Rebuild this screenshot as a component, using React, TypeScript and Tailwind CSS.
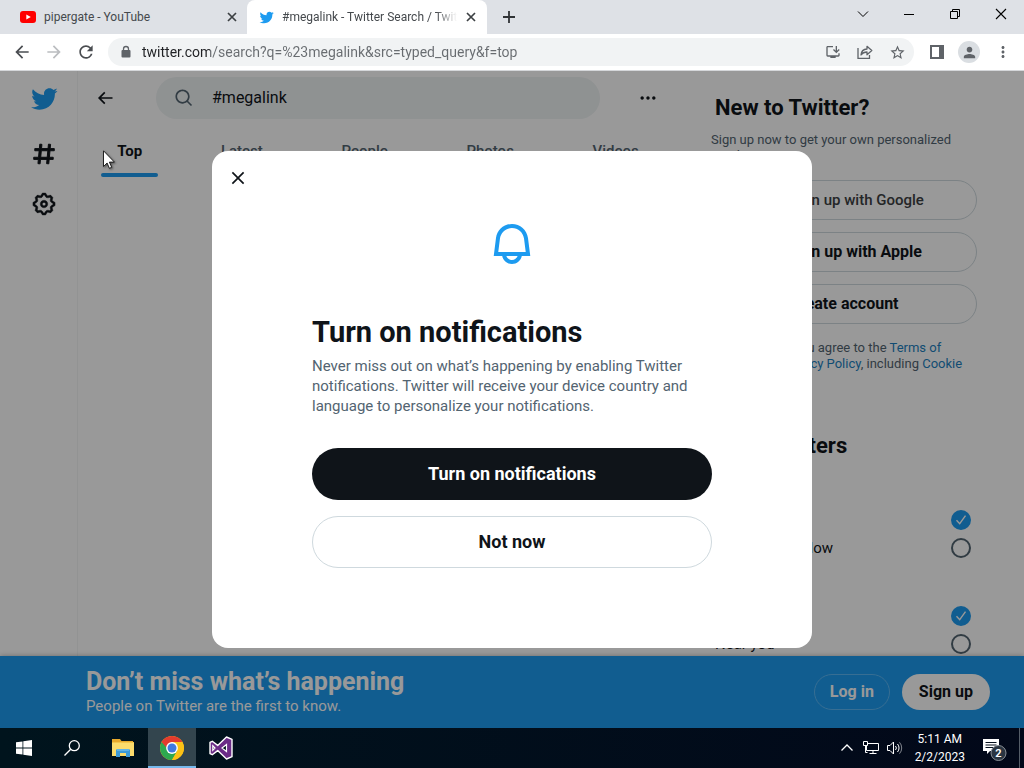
import type { ReactNode } from "react";
import {
  MdArrowBack,
  MdArrowForward,
  MdMoreVert,
  MdOutlineInstallDesktop,
  MdPerson,
  MdRefresh,
  MdStarBorder,
} from "react-icons/md";
import { FcGoogle } from "react-icons/fc";
import { FaApple } from "react-icons/fa";

const PATHS = {
  bird: "M23.643 4.937c-.835.37-1.732.62-2.675.733.962-.576 1.7-1.49 2.048-2.578-.9.534-1.897.922-2.958 1.13-.85-.904-2.06-1.47-3.4-1.47-2.572 0-4.658 2.086-4.658 4.66 0 .364.042.718.12 1.06-3.873-.195-7.304-2.05-9.602-4.868-.4.69-.63 1.49-.63 2.342 0 1.616.823 3.043 2.072 3.878-.764-.025-1.482-.234-2.11-.583v.06c0 2.257 1.605 4.14 3.737 4.568-.392.106-.803.162-1.227.162-.3 0-.593-.028-.877-.082.593 1.85 2.313 3.198 4.352 3.234-1.595 1.25-3.604 1.995-5.786 1.995-.376 0-.747-.022-1.112-.065 2.062 1.323 4.51 2.093 7.14 2.093 8.57 0 13.255-7.098 13.255-13.254 0-.2-.005-.402-.014-.602.91-.658 1.7-1.477 2.323-2.41z",
  search:
    "M10.25 3.75c-3.59 0-6.5 2.91-6.5 6.5s2.91 6.5 6.5 6.5c1.795 0 3.419-.726 4.596-1.904 1.178-1.177 1.904-2.801 1.904-4.596 0-3.59-2.91-6.5-6.5-6.5zm-8.5 6.5c0-4.694 3.806-8.5 8.5-8.5s8.5 3.806 8.5 8.5c0 1.986-.682 3.815-1.824 5.262l4.781 4.781-1.414 1.414-4.781-4.781c-1.447 1.142-3.276 1.824-5.262 1.824-4.694 0-8.5-3.806-8.5-8.5z",
  back: "M7.414 13l5.043 5.04-1.414 1.42L3.586 12l7.457-7.46 1.414 1.42L7.414 11H21v2H7.414z",
  close:
    "M10.59 12L4.54 5.96l1.42-1.42L12 10.59l6.04-6.05 1.42 1.42L13.41 12l6.05 6.04-1.42 1.42L12 13.41l-6.04 6.05-1.42-1.42L10.59 12z",
  dots: "M3 12c0-1.1.9-2 2-2s2 .9 2 2-.9 2-2 2-2-.9-2-2zm9 2c1.1 0 2-.9 2-2s-.9-2-2-2-2 .9-2 2 .9 2 2 2zm7 0c1.1 0 2-.9 2-2s-.9-2-2-2-2 .9-2 2 .9 2 2 2z",
  hash: "M10.09 3.098L9.72 7h5.99l.39-4.089 1.99.187L17.72 7h3.78v2h-3.97l-.56 6h3.53v2h-3.72l-.38 4.089-1.99-.187.36-3.902H8.78l-.38 4.089-1.99-.187L6.77 17H2.5v-2h4.46l.56-6H3.5V7h4.21l.39-4.089 1.99.187zM14.96 15l.56-6H9.53l-.56 6h5.99z",
  gear: "M10.54 1.75h2.92l1.57 2.36c.11.17.32.25.53.21l2.53-.59 2.17 2.17-.58 2.54c-.05.2.04.41.21.53l2.36 1.57v2.92l-2.36 1.57c-.17.12-.26.33-.21.53l.58 2.54-2.17 2.17-2.53-.59c-.21-.04-.42.04-.53.21l-1.57 2.36h-2.92l-1.58-2.36c-.11-.17-.32-.25-.52-.21l-2.54.59-2.17-2.17.58-2.54c.05-.2-.03-.41-.21-.53l-2.35-1.57v-2.92L4.1 8.97c.18-.12.26-.33.21-.53L3.73 5.9 5.9 3.73l2.54.59c.2.04.41-.04.52-.21l1.58-2.36zm1.07 2l-.98 1.47C10.05 6.08 9 6.5 7.99 6.27l-1.46-.34-.6.6.33 1.46c.24 1.01-.18 2.07-1.05 2.64l-1.46.98v.78l1.46.98c.87.57 1.29 1.63 1.05 2.64l-.33 1.46.6.6 1.46-.34c1.01-.23 2.06.19 2.64 1.05l.98 1.47h.78l.97-1.47c.58-.86 1.63-1.28 2.65-1.05l1.45.34.61-.6-.34-1.46c-.23-1.01.18-2.07 1.05-2.64l1.47-.98v-.78l-1.47-.98c-.87-.57-1.28-1.63-1.05-2.64l.34-1.46-.61-.6-1.45.34c-1.02.23-2.07-.19-2.65-1.05l-.97-1.47h-.78zM12 10.5c-.83 0-1.5.67-1.5 1.5s.67 1.5 1.5 1.5c.83 0 1.5-.67 1.5-1.5s-.67-1.5-1.5-1.5zM8.5 12c0-1.93 1.56-3.5 3.5-3.5 1.93 0 3.5 1.57 3.5 3.5s-1.57 3.5-3.5 3.5c-1.94 0-3.5-1.57-3.5-3.5z",
  bell: "M19.993 9.042C19.48 5.017 16.054 2 11.996 2s-7.49 3.021-7.999 7.051L2.866 18H7.1c.463 2.282 2.481 4 4.9 4s4.437-1.718 4.9-4h4.236l-1.143-8.958zM12 20c-1.306 0-2.417-.835-2.829-2h5.658c-.412 1.165-1.523 2-2.829 2zm-6.866-4l.847-6.698C6.364 6.272 8.941 4 11.996 4s5.627 2.268 6.013 5.295L18.864 16H5.134z",
};

function Glyph({ name, className }: { name: keyof typeof PATHS; className: string }) {
  return (
    <svg viewBox="0 0 24 24" fill="currentColor" className={className} aria-hidden="true">
      <path d={PATHS[name]} />
    </svg>
  );
}

function TabClose() {
  return (
    <button aria-label="Close tab" className="grid size-4 shrink-0 place-items-center text-[#3c4043]">
      <svg viewBox="0 0 10 10" className="size-[10px]" stroke="currentColor" strokeWidth="1.7">
        <path d="M1 1l8 8M9 1l-8 8" />
      </svg>
    </button>
  );
}

function TabStrip() {
  return (
    <div className="flex h-[34px] shrink-0 bg-[#dee1e6] text-xs text-[#45494d]">
      <div className="flex w-[247px] items-center pr-[7px] pl-5">
        <svg viewBox="0 0 16 12" className="mr-2 h-3 w-4 shrink-0" aria-hidden="true">
          <rect width="16" height="12" rx="3" fill="#f00" />
          <path d="M6.3 3.4v5.2L10.800 6z" fill="#fff" />
        </svg>
        <span className="flex-1 whitespace-nowrap">pipergate - YouTube</span>
        <TabClose />
      </div>
      <div className="flex w-60 items-center rounded-t-lg bg-white pr-2 pl-3">
        <Glyph name="bird" className="mr-2 size-[15px] shrink-0 text-[#1d9bf0]" />
        <span className="mr-1.5 flex-1 overflow-hidden mask-[linear-gradient(90deg,#000_88%,transparent)] whitespace-nowrap">
          #megalink - Twitter Search / Twitter
        </span>
        <TabClose />
      </div>
      <button aria-label="New tab" className="ml-3.5 grid w-4 place-items-center text-[#303336]">
        <svg viewBox="0 0 12 12" className="size-3" stroke="currentColor" strokeWidth="1.8">
          <path d="M6 0v12M0 6h12" />
        </svg>
      </button>
      <div className="ml-auto flex h-7 text-black">
        <button aria-label="Search tabs" className="grid w-[46px] place-items-center">
          <svg viewBox="0 0 12 12" className="size-3" fill="none" stroke="currentColor">
            <path d="M1 3.500l5 5 5-5" />
          </svg>
        </button>
        <button aria-label="Minimize" className="grid w-[46px] place-items-center">
          <svg viewBox="0 0 10 10" className="size-[10px]" stroke="currentColor">
            <path d="M0 5.500h10" />
          </svg>
        </button>
        <button aria-label="Restore" className="grid w-[46px] place-items-center">
          <svg viewBox="0 0 10 10" className="size-[10px]" fill="none" stroke="currentColor">
            <path d="M.5 2.500h7v7h-7zM2.500 2.500v-2h7v7h-2" />
          </svg>
        </button>
        <button aria-label="Close" className="grid w-[46px] place-items-center">
          <svg viewBox="0 0 12 12" className="size-3" stroke="currentColor" strokeWidth="1.100">
            <path d="M1 1l10 10M11 1L1 11" />
          </svg>
        </button>
      </div>
    </div>
  );
}

function Toolbar() {
  return (
    <div className="flex h-[37px] shrink-0 items-center border-b border-[#d5d7da] bg-white pr-3 pl-3 text-[#5f6368]">
      <button aria-label="Back" className="mr-3 text-[#4a4d51]">
        <MdArrowBack className="size-5" />
      </button>
      <button aria-label="Forward" className="mr-3 text-[#bbbdc0]">
        <MdArrowForward className="size-5" />
      </button>
      <button aria-label="Reload" className="mr-3 text-[#4a4d51]">
        <MdRefresh className="size-5" />
      </button>
      <div className="mr-4 flex h-7 flex-1 items-center rounded-full bg-[#f1f3f4] pr-2 pl-3">
        <svg viewBox="0 0 12 14" className="mr-2.5 h-[14px] w-3 shrink-0" aria-hidden="true">
          <rect x="1.500" y="5" width="9" height="7.500" rx="1" fill="currentColor" />
          <path d="M3.500 5.500V4a2.500 2.500 0 0 1 5 0v1.500" fill="none" stroke="currentColor" strokeWidth="1.300" />
        </svg>
        <input
          aria-label="Address"
          defaultValue="twitter.com/search?q=%23megalink&src=typed_query&f=top"
          className="min-w-0 flex-1 bg-[linear-gradient(90deg,#202124_68px,#686c70_68px)] bg-clip-text text-sm text-transparent outline-none"
        />
        <div className="flex items-center gap-4">
          <button aria-label="Install">
            <MdOutlineInstallDesktop className="size-4" />
          </button>
          <button aria-label="Share">
            <svg viewBox="0 0 16 16" className="size-4" fill="none" stroke="currentColor" strokeWidth="1.300">
              <path d="M1 4v10.300h11.500V11" />
              <path d="M4 11c.3-4 2.500-5.800 6-6V2.300L14.800 6.500 10 10.700V8C7.500 8 5.500 8.800 4 11z" strokeLinejoin="round" />
            </svg>
          </button>
          <button aria-label="Bookmark">
            <MdStarBorder className="size-[17px]" />
          </button>
        </div>
      </div>
      <div className="flex items-center">
        <button aria-label="Side panel" className="mr-3.5">
          <svg viewBox="0 0 14 14" className="size-[14px]">
            <path d="M1 1h12v12H1z" fill="none" stroke="currentColor" strokeWidth="2" />
            <path d="M9 1h4v12H9z" fill="currentColor" />
          </svg>
        </button>
        <button aria-label="Profile" className="mr-3.5 grid size-[22px] place-items-center rounded-full bg-[#dadee2]">
          <MdPerson className="size-[17px]" />
        </button>
        <button aria-label="Menu">
          <MdMoreVert className="size-[18px]" />
        </button>
      </div>
    </div>
  );
}

function SideNav() {
  return (
    <nav className="flex w-[78px] shrink-0 flex-col items-center border-r border-[#f3f6f6] pl-2.5">
      <a href="#home" aria-label="Twitter" className="flex h-14 items-center text-[#1d9bf0]">
        <Glyph name="bird" className="size-7" />
      </a>
      <a href="#explore" aria-label="Explore" className="flex h-[54px] items-center">
        <svg viewBox="0 0 24 24" fill="currentColor" stroke="currentColor" strokeWidth="0.900" className="size-[26px]">
          <path d={PATHS.hash} />
        </svg>
      </a>
      <a href="#settings" aria-label="Settings" className="flex h-[46px] items-center">
        <svg viewBox="0 0 24 24" fill="currentColor" stroke="currentColor" strokeWidth="0.300" className="size-[26px]">
          <path d={PATHS.gear} />
        </svg>
      </a>
    </nav>
  );
}

function SearchColumn() {
  return (
    <main className="w-[600px] shrink-0">
      <div className="flex h-[53px] items-center px-4">
        <button aria-label="Back" className="mr-[41px] ml-px">
          <Glyph name="back" className="size-5" />
        </button>
        <label className="flex h-[42px] w-[444px] items-center rounded-full bg-[#eff3f4] pl-[18px]">
          <Glyph name="search" className="mr-[18px] size-5 shrink-0 text-[#536471]" />
          <input
            aria-label="Search query"
            defaultValue="#megalink"
            className="min-w-0 flex-1 text-base outline-none"
          />
        </label>
        <button aria-label="More" className="ml-auto pr-1">
          <Glyph name="dots" className="size-5" />
        </button>
      </div>
      <div className="flex h-[53px] text-[15px] font-medium text-[#536471]">
        <a href="#top" className="flex flex-auto justify-center px-4 font-bold text-[#0f1419]">
          <span className="flex flex-col justify-between">
            <span className="pt-[17px] leading-5">Top</span>
            <span className="-mx-4 h-1 rounded-full bg-[#1d9bf0]" />
          </span>
        </a>
        {["Latest", "People", "Photos", "Videos"].map((tab) => (
          <a key={tab} href={`#${tab.toLowerCase()}`} className="flex flex-auto justify-center px-4 pt-[17px] leading-5">
            {tab}
          </a>
        ))}
      </div>
    </main>
  );
}

function SignupButton({ children, className = "" }: { children: ReactNode; className?: string }) {
  return (
    <button className={`flex h-10 items-center justify-center gap-1 rounded-full border border-[#cfd9de] ${className}`}>
      {children}
    </button>
  );
}

function FilterGroup({ title, name, options }: { title: string; name: string; options: string[] }) {
  return (
    <fieldset>
      <legend className="h-10 text-[15px] leading-10 font-bold">{title}</legend>
      {options.map((option, i) => (
        <label key={option} className="flex h-7 items-center justify-between text-[15px]">
          {option}
          <span className="grid size-5">
            <input
              type="radio"
              name={name}
              defaultChecked={i === 0}
              className="col-start-1 row-start-1 size-5 appearance-none rounded-full border-2 border-[#536471] checked:border-[#1d9bf0] checked:bg-[#1d9bf0]"
            />
            {i === 0 && (
              <svg viewBox="0 0 20 20" className="pointer-events-none col-start-1 row-start-1 size-5" fill="none" stroke="#fff" strokeWidth="1.400">
                <path d="M5.500 10.300l3.200 3.400 5.800-8" />
              </svg>
            )}
          </span>
        </label>
      ))}
    </fieldset>
  );
}

function Sidebar() {
  return (
    <aside className="mr-auto ml-5 w-[290px] shrink-0 pt-[25px]">
      <section className="flex flex-col pr-[11px] pl-[13px]">
        <h2 className="mb-3 px-1 text-[22px] leading-6 font-bold">New to Twitter?</h2>
        <p className="mb-4 text-[13px] leading-4 text-[#536471]">
          Sign up now to get your own personalized timeline!
        </p>
        <div className="mb-4 flex flex-col gap-3">
          <SignupButton className="text-[15px] font-medium text-[#3c4043]">
            <FcGoogle className="mr-1 size-[18px]" /> Sign up with Google
          </SignupButton>
          <SignupButton className="text-base font-bold">
            <FaApple className="size-[18px]" /> Sign up with Apple
          </SignupButton>
          <SignupButton className="text-base font-bold">Create account</SignupButton>
        </div>
        <p className="text-[13px] leading-4 text-[#536471]">
          By signing up, you agree to the{" "}
          <a href="#terms" className="text-[#1d7fc0]">Terms of Service</a> and{" "}
          <a href="#privacy" className="text-[#1d7fc0]">Privacy Policy</a>, including{" "}
          <a href="#cookies" className="text-[#1d7fc0]">Cookie Use.</a>
        </p>
      </section>
      <section className="mt-[46px] px-[17px]">
        <h2 className="mb-2 text-[22px] leading-6 font-bold">Search filters</h2>
        <FilterGroup title="People" name="people" options={["From anyone", "People you follow"]} />
        <FilterGroup title="Location" name="location" options={["Anywhere", "Near you"]} />
      </section>
    </aside>
  );
}

function SignupBar() {
  return (
    <div className="absolute inset-x-0 bottom-0 flex h-[72px] items-center bg-[#1d9bf0] pr-[34px] pl-[86px] text-white shadow-[0_0_5px_rgba(0,0,0,0.3)]">
      <div className="flex-1">
        <p className="text-[25px] leading-7 font-bold">Don’t miss what’s happening</p>
        <p className="text-[15px] leading-5">People on Twitter are the first to know.</p>
      </div>
      <div className="flex gap-3 font-bold">
        <button className="h-9 rounded-full border border-[#5cb8f5] px-[15px]">Log in</button>
        <button className="h-9 rounded-full bg-white px-[17px] text-[#0f1419]">Sign up</button>
      </div>
    </div>
  );
}

function NotificationsDialog() {
  return (
    <div className="absolute inset-0 grid place-items-center bg-black/40">
      <div role="dialog" aria-labelledby="dialog-title" className="w-[600px] rounded-2xl bg-white pb-20">
        <div className="flex h-[53px] items-center px-4">
          <button aria-label="Close dialog">
            <Glyph name="close" className="size-5" />
          </button>
        </div>
        <div className="mx-auto flex w-[400px] flex-col pt-4">
          <Glyph name="bell" className="mb-[46px] size-12 self-center text-[#1d9bf0]" />
          <h1 id="dialog-title" className="mb-1.5 text-[29px] leading-9 font-bold">Turn on notifications</h1>
          <p className="mb-8 text-[15px] leading-5 text-[#536471]">
            Never miss out on what’s happening by enabling Twitter notifications. Twitter will receive your device
            country and language to personalize your notifications.
          </p>
          <button className="mb-4 h-[52px] rounded-full bg-[#0f1419] text-lg font-bold text-white">
            Turn on notifications
          </button>
          <button className="h-[52px] rounded-full border border-[#cfd9de] text-lg font-bold">Not now</button>
        </div>
      </div>
    </div>
  );
}

function MouseCursor() {
  return (
    <svg viewBox="0 0 12 19" className="pointer-events-none absolute top-[79px] left-[103px] h-[19px] w-3 drop-shadow-[1px_1px_1px_rgba(0,0,0,0.5)]" aria-hidden="true">
      <path d="M.5.800v15.700l3.600-3.500 2.300 5.300 2.300-1-2.300-5.200h5z" fill="#fff" stroke="#111" strokeWidth="0.900" />
    </svg>
  );
}

function Taskbar() {
  return (
    <footer className="flex h-10 shrink-0 bg-linear-to-r from-[#00141d] to-[#020819] text-xs text-white">
      <button aria-label="Start" className="grid w-12 place-items-center">
        <svg viewBox="0 0 16 16" className="size-4" fill="#fff">
          <path d="M0 2.300l6.500-.9v6.200H0zM7.300 1.300L16 0v7.600H7.300zM0 8.400h6.500v6.200L0 13.700zM7.300 8.400H16V16l-8.700-1.200z" />
        </svg>
      </button>
      <button aria-label="Search" className="grid w-12 place-items-center">
        <svg viewBox="0 0 16 16" className="size-4" fill="none" stroke="#fff" strokeWidth="1.300">
          <circle cx="10.300" cy="5.700" r="5" />
          <path d="M6.700 9.300L.5 15.500" />
        </svg>
      </button>
      <button aria-label="File Explorer" className="grid w-[52px] place-items-center pl-0.5">
        <svg viewBox="0 0 22 18" className="h-[18px] w-[22px]">
          <path d="M0 0h8l1.500 2H21v3H0z" fill="#e8a92c" />
          <path d="M0 3h22v14H0z" fill="#fcdc6c" />
          <path d="M0 3h22v1H0z" fill="#f3c64b" />
          <path d="M4 18v-7l1-1h12l1 1v7h-4v-4H8v4z" fill="#3d9bd8" />
          <path d="M5 10h12v2H5z" fill="#62b4e6" />
        </svg>
      </button>
      <button aria-label="Chrome" className="grid w-12 place-items-center border-b-2 border-[#76b9ed] bg-[#33454e] pt-0.5">
        <svg viewBox="0 0 24 24" className="size-6">
          <circle cx="12" cy="12" r="12" fill="#fbc116" />
          <path d="M12 12L1.610 6A12 12 0 0 0 12 24l5.200-9z" fill="#2da94f" />
          <path d="M12 12H6.800L1.610 6A12 12 0 0 1 22.390 6H12z" fill="#e33b2e" />
          <path d="M12 6h10.390A12 12 0 0 1 12 24l5.200-9z" fill="#fbc116" />
          <circle cx="12" cy="12" r="5.900" fill="#fff" />
          <circle cx="12" cy="12" r="4.500" fill="#4079e0" />
        </svg>
      </button>
      <button aria-label="Visual Studio" className="grid w-[50px] place-items-center">
        <svg viewBox="0 0 24 24" className="size-6">
          <path d="M17.500 1L23 3.300v17.400L17.500 23 8.700 14.600 3.300 18.700 1 17.600V6.400l2.300-1.100 5.400 4.100z" fill="#6b2c87" stroke="#fff" strokeWidth="1.400" strokeLinejoin="round" />
          <path d="M3.800 9.700v4.600L6 12zM17.500 8.500v7L13 12z" fill="#00131d" stroke="#fff" strokeWidth="1.200" />
        </svg>
      </button>
      <div className="ml-auto flex items-center">
        <button aria-label="Show hidden icons" className="mr-2.5">
          <svg viewBox="0 0 12 12" className="size-3" fill="none" stroke="#fff" strokeWidth="1.300">
            <path d="M.5 8.500L6 3l5.500 5.500" />
          </svg>
        </button>
        <button aria-label="Network" className="mr-2">
          <svg viewBox="0 0 16 16" className="size-4" fill="none" stroke="#fff">
            <path d="M5 3.500h10.500v7H3.500V6M10 10.500v3M6.500 13.500h7M.5 1.500h4v4h-4zM2.500 5.500v7h2" />
          </svg>
        </button>
        <button aria-label="Volume" className="mr-3">
          <svg viewBox="0 0 16 16" className="size-4" fill="none" stroke="#fff">
            <path d="M.5 5.500h2.500l3.500-3.500v12L3 10.500H.5z" />
            <path d="M8.500 6a3 3 0 0 1 0 4M10.500 4a6 6 0 0 1 0 8" />
            <path d="M12.500 2.300a8.500 8.500 0 0 1 0 11.400" opacity=".5" />
          </svg>
        </button>
        <div className="mr-4 text-center leading-[18px]">
          <p>5:11 AM</p>
          <p>2/2/2023</p>
        </div>
        <button aria-label="Notifications" className="mr-3 grid">
          <svg viewBox="0 0 26 26" className="size-[26px]">
            <path d="M2 4h16v12h-9l-3 3v-3H2z" fill="#fff" />
            <path d="M4.500 7.500h11M4.500 10h11M4.500 12.500h8" stroke="#06101d" />
            <circle cx="17.500" cy="18" r="7.500" fill="#2b3541" stroke="#8a9097" />
            <text x="17.500" y="22" textAnchor="middle" fontSize="11" fontWeight="600" fill="#fff">2</text>
          </svg>
        </button>
        <span className="h-10 w-[5px] border-l border-[#555d68]" />
      </div>
    </footer>
  );
}

export default function App() {
  return (
    <div className="flex h-screen flex-col overflow-hidden font-['Roboto','Open_Sans',sans-serif]">
      <TabStrip />
      <Toolbar />
      <div className="relative flex-1 overflow-hidden bg-white text-[#0f1419]">
        <div className="flex h-full overflow-hidden">
          <SideNav />
          <SearchColumn />
          <Sidebar />
        </div>
        <SignupBar />
        <NotificationsDialog />
        <MouseCursor />
      </div>
      <Taskbar />
    </div>
  );
}
